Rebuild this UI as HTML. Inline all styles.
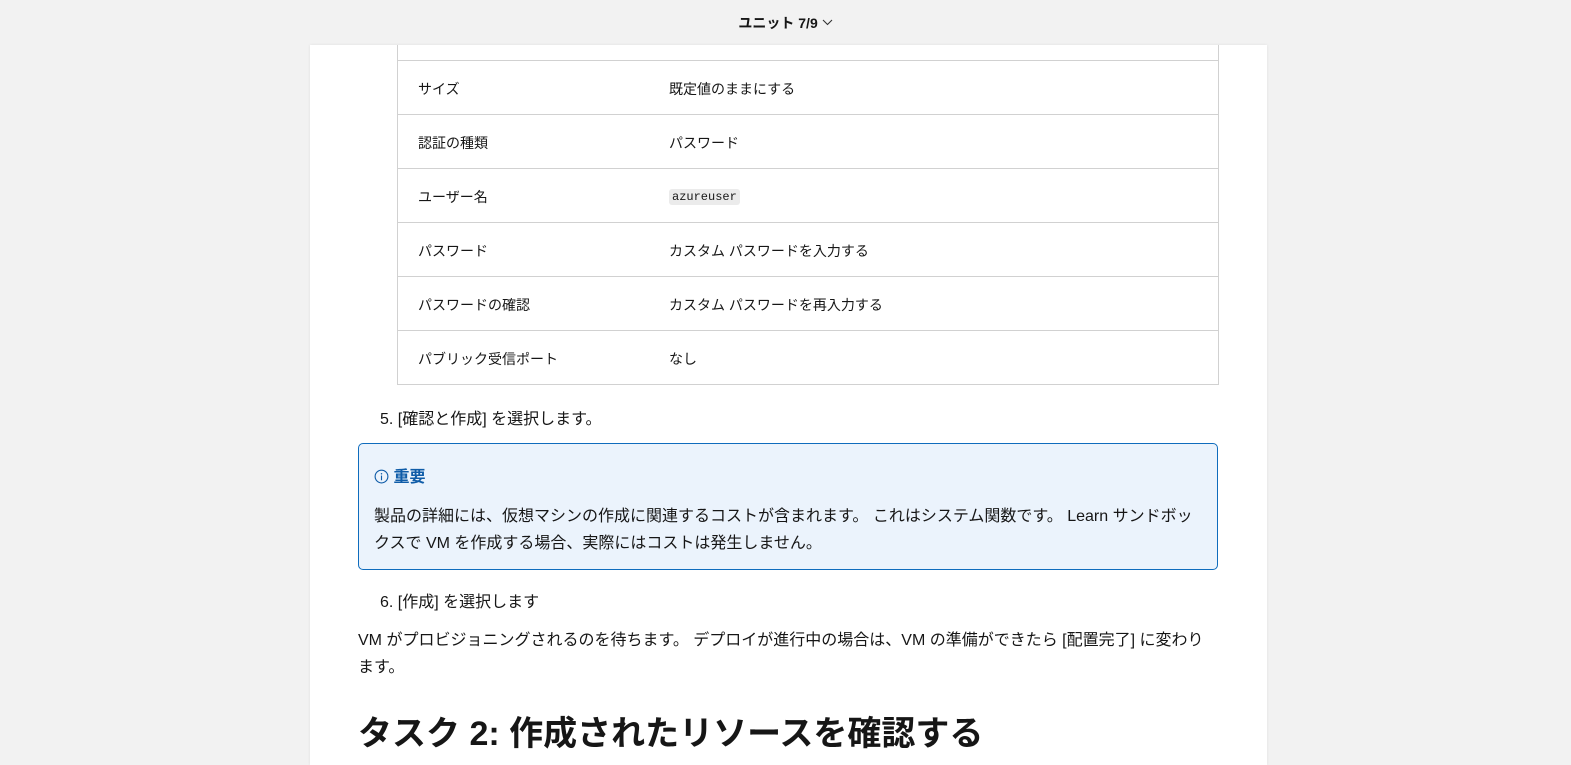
<!DOCTYPE html>
<html><head><meta charset="utf-8"><style>
body{margin:0;width:1571px;height:748px;overflow:hidden;background:#f2f2f2;font-family:"Liberation Sans","Noto Sans CJK JP",sans-serif;color:#161616;position:relative}
.top{position:absolute;top:13px;left:0;width:1571px;text-align:center;font-size:14px;font-weight:bold}
.panel{position:absolute;left:310px;top:45px;width:957px;height:720px;background:#fff;box-shadow:0 0 3px rgba(0,0,0,.08)}
.tbl{position:absolute;left:87px;top:0;width:820px;border-left:1px solid #d1d1d1;border-right:1px solid #d1d1d1;border-bottom:1px solid #d1d1d1;font-size:14px}
.row{height:53px;border-top:1px solid #d1d1d1;position:relative}
.row span{position:absolute;top:18px;left:20px}
.row span+span{left:271px}
code{font-family:"Liberation Mono",monospace;font-size:12px;background:#ebebeb;padding:1px 3px;border-radius:3px}
.t{position:absolute;font-size:16px;white-space:nowrap}
.call{position:absolute;left:48px;top:398px;width:858px;height:125px;background:#ebf3fc;border:1px solid #0f6cbd;border-radius:5px}
h2{position:absolute;left:48px;top:661px;margin:0;font-size:34px;font-weight:bold;white-space:nowrap}
</style></head><body>
<div class="top">ユニット 7/9 <svg width="11" height="7" viewBox="0 0 11 7" style="vertical-align:2px"><path d="M1 1l4.5 4.5L10 1" fill="none" stroke="#333" stroke-width="1.1"/></svg></div>
<div class="panel">
<div class="tbl">
<div style="height:15px"></div>
<div class="row"><span>サイズ</span><span>既定値のままにする</span></div>
<div class="row"><span>認証の種類</span><span>パスワード</span></div>
<div class="row"><span>ユーザー名</span><span><code>azureuser</code></span></div>
<div class="row"><span>パスワード</span><span>カスタム パスワードを入力する</span></div>
<div class="row"><span>パスワードの確認</span><span>カスタム パスワードを再入力する</span></div>
<div class="row"><span>パブリック受信ポート</span><span>なし</span></div>
</div>
<div class="t" style="left:70px;top:360px">5. [確認と作成] を選択します。</div>
<div class="call">
<div class="t" style="left:15px;top:19px;color:#0f5ca8;font-weight:bold"><svg width="15" height="15" viewBox="0 0 16 16" style="vertical-align:-2px"><circle cx="8" cy="8" r="6.8" fill="none" stroke="#0f5ca8" stroke-width="1.2"/><rect x="7.4" y="7" width="1.2" height="5" fill="#0f5ca8"/><circle cx="8" cy="5" r=".8" fill="#0f5ca8"/></svg> 重要</div>
<div class="t" style="left:15px;top:59px;line-height:27px">製品の詳細には、仮想マシンの作成に関連するコストが含まれます。 これはシステム関数です。 Learn サンドボッ<br>クスで VM を作成する場合、実際にはコストは発生しません。</div>
</div>
<div class="t" style="left:70px;top:543px">6. [作成] を選択します</div>
<div class="t" style="left:48px;top:582px;line-height:27px">VM がプロビジョニングされるのを待ちます。 デプロイが進行中の場合は、VM の準備ができたら [配置完了] に変わり<br>ます。</div>
<h2>タスク 2: 作成されたリソースを確認する</h2>
</div>
</body></html>
